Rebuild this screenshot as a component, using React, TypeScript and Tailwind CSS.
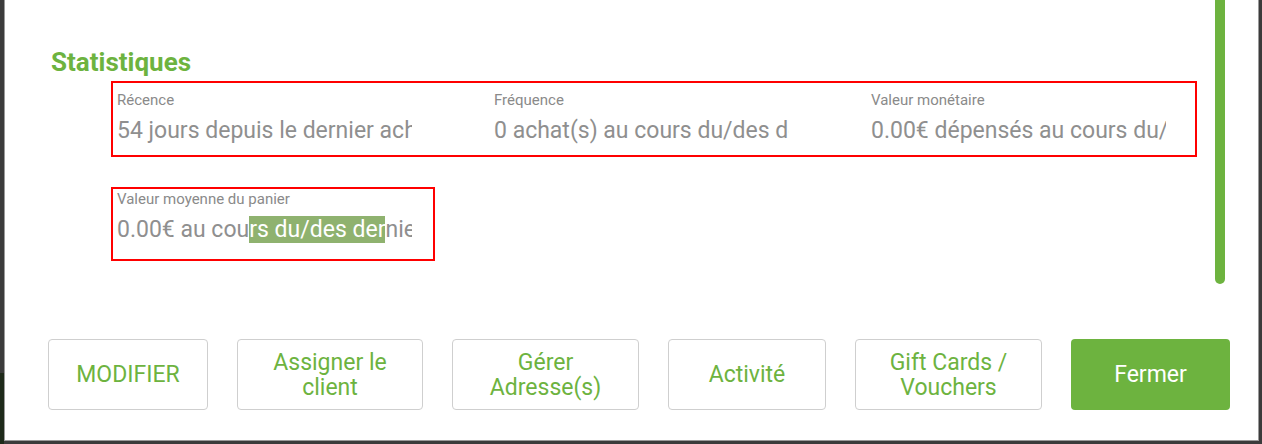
import React from "react";

const green = "text-[#6db33f]";

function Field({ label, value, gap }: { label: string; value: React.ReactNode; gap: string }) {
  return (
    <div className="w-[377px] shrink-0 pl-[4px]">
      <div className="text-[15px] leading-[20px] text-[#8a8a8a]">{label}</div>
      <div className={"w-[295px] overflow-hidden whitespace-nowrap text-[23px] leading-[30px] text-[#8f8f8f] " + gap}>
        {value}
      </div>
    </div>
  );
}

function Btn({ w, children, primary }: { w: string; children: React.ReactNode; primary?: boolean }) {
  return (
    <div
      className={
        "h-[71px] shrink-0 rounded-[4px] flex items-center justify-center text-center text-[23px] leading-[25px] " +
        w +
        (primary ? " bg-[#6db33f] text-white" : " border border-[#cfcfcf] bg-white " + green)
      }
    >
      {children}
    </div>
  );
}

export default function App() {
  return (
    <div
      className="relative w-[1262px] h-[444px] bg-[#3b3b3b] overflow-hidden flex"
      style={{ fontFamily: "Roboto, 'Liberation Sans', sans-serif" }}
    >
      <div className="w-[4px] shrink-0 flex flex-col">
        <div className="h-[373px] bg-[#3b3b3b]" />
        <div className="flex-1 bg-[#1e2a1a]" />
      </div>
      <div className="relative w-[1255px] h-[441px] bg-white border-l border-r border-b border-[#9a9a9a]">
        <div className="pt-[47px] pl-[46px]">
          <h2 className={"text-[26px] leading-[30px] font-bold " + green}>Statistiques</h2>
          <div className="ml-[60px] mt-[4px] w-[1086px] h-[76px] border-2 border-[#ff0000] pt-[7px] flex">
            <Field gap="mt-[6px]" label="Récence" value="54 jours depuis le dernier achat" />
            <Field gap="mt-[6px]" label="Fréquence" value="0 achat(s) au cours du/des derniers" />
            <Field gap="mt-[6px]" label="Valeur monétaire" value="0.00€ dépensés au cours du/des derniers" />
          </div>
          <div className="ml-[60px] mt-[30px] w-[324px] h-[74px] border-2 border-[#ff0000] flex">
            <Field
              gap="mt-[6px]"
              label="Valeur moyenne du panier"
              value={
                <>
                  0.00€ au cou<span className="bg-[#8fb26f] text-white">rs du/des der</span>niers jours
                </>
              }
            />
          </div>
          <div className="mt-[78px] -ml-[3px] flex gap-[29px]">
            <Btn w="w-[160px]">MODIFIER</Btn>
            <Btn w="w-[186px]">
              Assigner le
              <br />
              client
            </Btn>
            <Btn w="w-[187px]">
              Gérer
              <br />
              Adresse(s)
            </Btn>
            <Btn w="w-[158px]">Activité</Btn>
            <Btn w="w-[187px]">
              Gift Cards /
              <br />
              Vouchers
            </Btn>
            <Btn w="w-[159px]" primary>
              Fermer
            </Btn>
          </div>
        </div>
        <div className="absolute left-[1210px] top-0 w-[10px] h-[284px] rounded-b-full bg-[#6db33f]" />
      </div>
    </div>
  );
}
